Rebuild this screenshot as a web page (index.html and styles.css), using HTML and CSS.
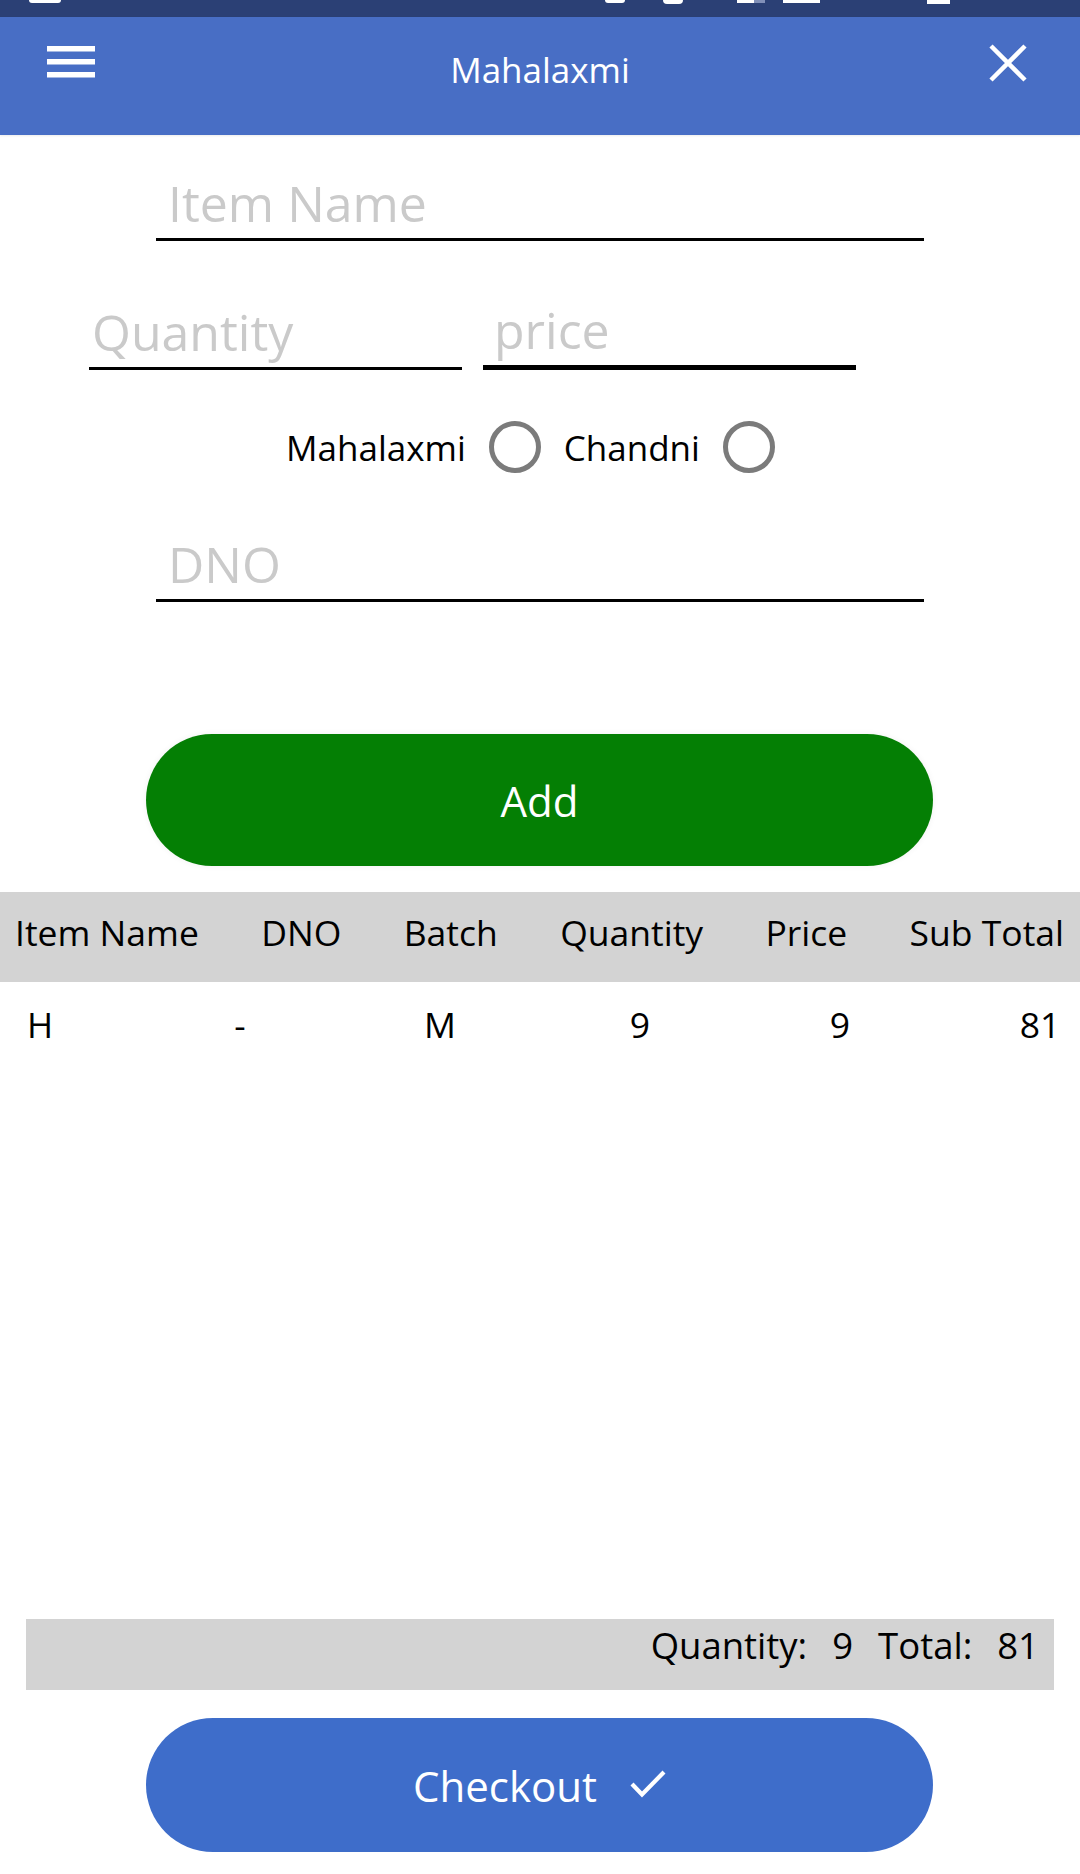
FILE: index.html
```html
<!DOCTYPE html>
<html lang="en">
<head>
<meta charset="utf-8">
<title>Mahalaxmi</title>
<link rel="stylesheet" href="styles.css">
</head>
<body>
<div class="screen">
  <div class="statusbar">
    <span class="sb sb-a"></span>
    <span class="sb sb-b"></span>
    <span class="sb sb-c"></span>
    <span class="sb sb-d"></span>
    <span class="sb sb-e"></span>
    <span class="sb sb-f"></span>
  </div>
  <header class="appbar">
    <svg class="menu-icon" width="48" height="34" viewBox="0 0 48 34">
      <rect x="0" y="1" width="48" height="5.5" fill="#fff"/>
      <rect x="0" y="14" width="48" height="5.5" fill="#fff"/>
      <rect x="0" y="27" width="48" height="5.5" fill="#fff"/>
    </svg>
    <h1 class="title">Mahalaxmi</h1>
    <svg class="close-icon" width="38" height="38" viewBox="0 0 38 38">
      <path d="M2 2 L36 36 M36 2 L2 36" stroke="#fff" stroke-width="4.5" fill="none"/>
    </svg>
  </header>

  <form class="entry">
    <input class="field field-wide field-item" type="text" placeholder="Item Name">
    <div class="pair">
      <input class="field field-half field-qty" type="text" placeholder="Quantity">
      <input class="field field-half field-price" type="text" placeholder="price">
    </div>
    <div class="batch">
      <span class="batch-label">Mahalaxmi</span><span class="radio"></span>
      <span class="batch-label">Chandni</span><span class="radio"></span>
    </div>
    <input class="field field-wide field-dno" type="text" placeholder="DNO">
    <button class="btn btn-add" type="button">Add</button>
  </form>

  <div class="table">
    <div class="thead">
      <span>Item Name</span>
      <span>DNO</span>
      <span>Batch</span>
      <span>Quantity</span>
      <span>Price</span>
      <span>Sub Total</span>
    </div>
    <div class="trow">
      <span>H</span>
      <span>-</span>
      <span>M</span>
      <span>9</span>
      <span>9</span>
      <span>81</span>
    </div>
  </div>

  <div class="totals">
    <span>Quantity:</span>
    <span>9</span>
    <span>Total:</span>
    <span>81</span>
  </div>

  <button class="btn btn-checkout" type="button">
    <span>Checkout</span>
    <svg class="check-icon" width="36" height="30" viewBox="0 0 36 30">
      <path d="M2 15 L12 25.5 L34 3" stroke="#fff" stroke-width="4.2" fill="none"/>
    </svg>
  </button>
</div>
</body>
</html>
```

FILE: styles.css
```css
* {
  box-sizing: border-box;
}

html, body {
  margin: 0;
  padding: 0;
  background: #ffffff;
}

body {
  font-family: "Open Sans", "Noto Sans", "Liberation Sans", sans-serif;
  color: #000;
}

.screen {
  width: 1080px;
  height: 1874px;
  display: flex;
  flex-direction: column;
  overflow: hidden;
  background: #fff;
}

/* status bar */
.statusbar {
  height: 17px;
  flex: none;
  background: #2b4075;
  display: flex;
  align-items: flex-start;
}

.sb {
  display: block;
  background: #fff;
  height: 3px;
}

.sb-a { margin-left: 29px; width: 32px; border-radius: 0 0 6px 6px; }
.sb-b { margin-left: 544px; width: 20px; border-radius: 0 0 4px 4px; }
.sb-c { margin-left: 38px; width: 20px; height: 4px; border-radius: 0 0 10px 10px; }
.sb-d { margin-left: 54px; width: 28px; background: linear-gradient(90deg, #fff 0 60%, #8190b8 60% 100%); }
.sb-e { margin-left: 18px; width: 37px; }
.sb-f { margin-left: 107px; width: 23px; height: 4px; }

/* app bar */
.appbar {
  height: 118px;
  flex: none;
  background: #486ec5;
  display: grid;
  grid-template-columns: 1fr auto 1fr;
  align-items: start;
  padding: 0 47px;
  box-shadow: 0 1px 2px rgba(0, 0, 0, 0.08);
  position: relative;
  z-index: 1;
}

.menu-icon {
  display: block;
  margin-top: 28px;
}

.title {
  margin: 29px 0 0;
  font-size: 35px;
  line-height: 47px;
  font-weight: 400;
  color: #fff;
}

.close-icon {
  display: block;
  justify-self: end;
  margin-top: 27px;
  margin-right: 6px;
}

/* form */
.entry {
  display: flex;
  flex-direction: column;
  align-items: flex-start;
  flex: none;
  margin: 0;
}

.field {
  font-family: "Open Sans", "Noto Sans", "Liberation Sans", sans-serif;
  font-size: 50px;
  height: 71px;
  padding: 0 0 3px;
  border: none;
  border-bottom: 3px solid #000;
  background: transparent;
  outline: none;
  color: #000;
  border-radius: 0;
}

.field::placeholder {
  color: #cacaca;
}

.field-wide {
  width: 768px;
  margin-left: 156px;
  padding-left: 12px;
}

.field-item {
  margin-top: 35px;
}

.field-dno {
  margin-top: 58px;
}

.pair {
  display: flex;
  align-items: flex-end;
  gap: 21px;
  margin-left: 89px;
  margin-top: 56px;
}

.field-half {
  width: 373px;
}

.field-qty {
  padding-left: 3px;
}

.field-price {
  height: 73px;
  border-bottom-width: 5px;
  padding-left: 11px;
}

.batch {
  align-self: stretch;
  display: flex;
  align-items: center;
  justify-content: center;
  gap: 23px;
  padding-right: 19px;
  margin-top: 51px;
  height: 52px;
}

.batch-label {
  font-size: 35px;
  line-height: 47px;
}

.radio {
  width: 52px;
  height: 52px;
  border: 5px solid #7b7b7b;
  border-radius: 50%;
  flex: none;
}

.btn {
  border: none;
  border-radius: 67px;
  width: 787px;
  height: 132px;
  color: #fff;
  font-family: "Open Sans", "Noto Sans", "Liberation Sans", sans-serif;
  font-size: 42px;
  display: flex;
  align-items: center;
  justify-content: center;
  padding: 0;
  flex: none;
}

.btn-add {
  background: #047f04;
  margin-left: 146px;
  margin-top: 132px;
  box-shadow: 0 0 6px rgba(0, 0, 0, 0.06);
}

/* table */
.table {
  flex: 1;
  margin-top: 26px;
  display: flex;
  flex-direction: column;
}

.thead {
  height: 90px;
  background: #d3d3d3;
  display: flex;
  justify-content: space-between;
  align-items: flex-start;
  padding: 17px 16px 0 15px;
  font-size: 35.5px;
  line-height: 47px;
}

.trow {
  display: grid;
  grid-template-columns: repeat(6, 80px);
  column-gap: 120px;
  justify-items: center;
  padding-top: 19px;
  font-size: 35.5px;
  line-height: 47px;
}

/* totals */
.totals {
  flex: none;
  height: 71px;
  margin: 0 26px;
  background: #d3d3d3;
  display: flex;
  justify-content: flex-end;
  align-items: flex-start;
  gap: 25px;
  padding: 3px 15px 0 0;
  font-size: 36.5px;
  line-height: 47px;
}

/* checkout */
.btn-checkout {
  background: #3e6dca;
  height: 134px;
  margin: 28px 0 22px 146px;
  gap: 33px;
}

.check-icon {
  display: block;
  margin-top: -2px;
}
```
